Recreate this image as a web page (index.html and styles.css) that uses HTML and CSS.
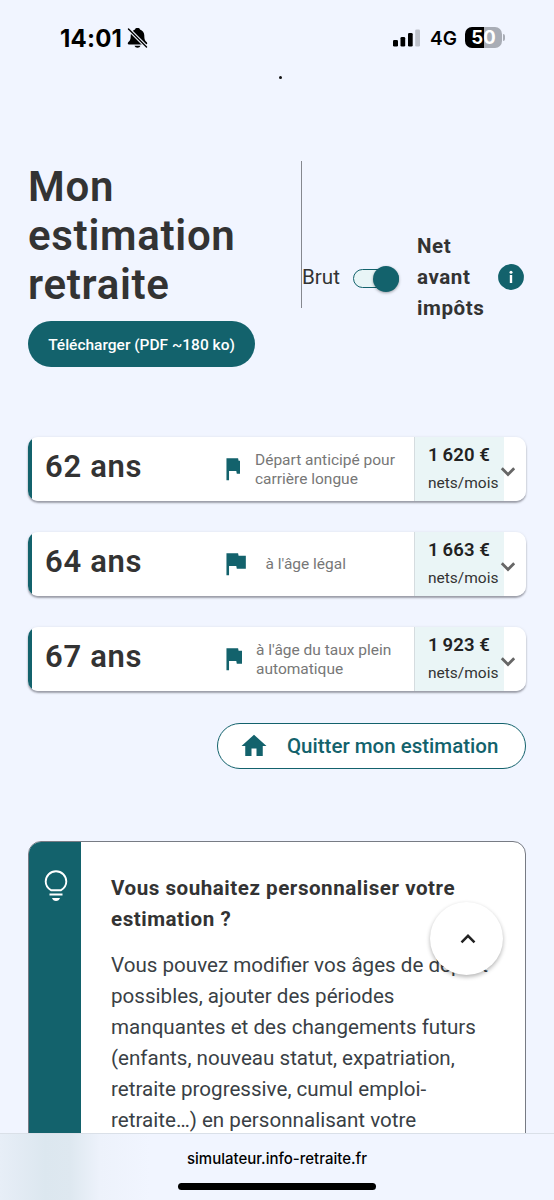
FILE: index.html
```html
<!DOCTYPE html>
<html lang="fr">
<head>
    <meta charset="UTF-8">
    <title>Mon estimation retraite</title>
    <link rel="stylesheet" href="styles.css">
</head>
<body>
    <div class="statut">
        <span class="heure">14:01</span>
        <svg class="cloche" width="22" height="22" viewBox="0 0 22 22">
            <path d="M10.500 1C9.100 1 8.300 1.500 8 2.400C5.400 3.300 3.700 5.600 3.700 8.500C3.700 12.800 2.700 13.900 1.200 15.300C0.400 16.200 0.700 17.600 2 17.600H19C20.300 17.600 20.600 16.200 19.800 15.300C18.300 13.900 17.300 12.800 17.300 8.500C17.300 5.600 15.600 3.300 13 2.400C12.700 1.500 11.900 1 10.500 1ZM7.500 18.800C8 20 9 20.700 10.500 20.700C12 20.700 13 20 13.500 18.800Z"/>
            <path d="M0.500 1L20 20.500" stroke="#f1f5ff" stroke-width="3.600"/>
            <path d="M1.500 2L19.500 20" stroke="#000" stroke-width="1.400" stroke-linecap="round"/>
        </svg>
        <svg class="reseau" width="28" height="18" viewBox="0 0 28 18">
            <rect x="0" y="11" width="5" height="6.500" rx="1.300"/>
            <rect x="7.500" y="8" width="4.700" height="9.500" rx="1.300"/>
            <rect x="15" y="4" width="4.700" height="13.500" rx="1.300"/>
            <rect x="22.200" y="0.500" width="4.800" height="17" rx="1.300" fill="#bfc3cc"/>
        </svg>
        <span class="g4">4G</span>
        <span class="batterie"><b>5</b><b>0</b></span>
        <span class="borne"></span>
    </div>
    <div class="point"></div>

    <main>
        <header>
            <h1>Mon<br>estimation<br>retraite</h1>
            <div class="choix">
                <span class="brut">Brut</span>
                <span class="bascule"><i></i></span>
                <strong>Net<br>avant<br>impôts</strong>
                <svg class="info" width="26" height="26" viewBox="0 0 26 26">
                    <circle cx="13" cy="13" r="12.900" fill="#13626c"/>
                    <circle cx="13" cy="8.200" r="1.500" fill="#fff"/>
                    <path d="M13 11V19" stroke="#fff" stroke-width="2.400"/>
                </svg>
            </div>
        </header>
        <button class="telecharger">Télécharger (PDF ~180 ko)</button>

        <section class="ages">
            <div class="carte">
                <h2>62 ans</h2>
                <span class="drapeau etroit"><svg viewBox="0 0 24 24"><path d="M14.400 6L14 4H5v17h2v-7h5.600l.4 2h7V6z"/></svg></span>
                <p class="l62">Départ anticipé pour<br>carrière longue</p>
                <div class="montant"><b>1&#8201;620 €</b><span>nets/mois</span></div>
                <svg class="fleche" width="16" height="12" viewBox="0 0 16 12"><path d="M1.800 2.200L8 8.400L14.200 2.200"/></svg>
            </div>
            <div class="carte">
                <h2>64 ans</h2>
                <span class="drapeau"><svg viewBox="0 0 24 24"><path d="M14.400 6L14 4H5v17h2v-7h5.600l.4 2h7V6z"/></svg></span>
                <p class="l64">à l'âge légal</p>
                <div class="montant"><b>1&#8201;663 €</b><span>nets/mois</span></div>
                <svg class="fleche" width="16" height="12" viewBox="0 0 16 12"><path d="M1.800 2.200L8 8.400L14.200 2.200"/></svg>
            </div>
            <div class="carte">
                <h2>67 ans</h2>
                <span class="drapeau moyen"><svg viewBox="0 0 24 24"><path d="M14.400 6L14 4H5v17h2v-7h5.600l.4 2h7V6z"/></svg></span>
                <p class="l67">à l'âge du taux plein<br>automatique</p>
                <div class="montant"><b>1&#8201;923 €</b><span>nets/mois</span></div>
                <svg class="fleche" width="16" height="12" viewBox="0 0 16 12"><path d="M1.800 2.200L8 8.400L14.200 2.200"/></svg>
            </div>
        </section>

        <button class="quitter">
            <svg width="30" height="30" viewBox="0 0 24 24"><path d="M10 20v-6h4v6h5v-8h3L12 3 2 12h3v8z"/></svg>
            <span>Quitter mon estimation</span>
        </button>

        <section class="conseil">
            <div class="bande">
                <svg width="24" height="32" viewBox="0 0 24 32" fill="none" stroke="#fff">
                    <path d="M7.300 20.300C4 18.500 1.700 15.400 1.700 11.500A10.300 10.300 0 0 1 22.300 11.500C22.300 15.400 20 18.500 16.700 20.300Z" stroke-width="1.900" stroke-linejoin="round"/>
                    <path d="M5.500 24.400H18.500" stroke-width="2"/>
                    <path d="M8 28H16Q15 31 12 31Q9 31 8 28Z" fill="#fff" stroke="none"/>
                </svg>
            </div>
            <div class="texte">
                <h3>Vous souhaitez personnaliser votre<br>estimation ?</h3>
                <p>Vous pouvez modifier vos âges de départ<br>possibles, ajouter des périodes<br>manquantes et des changements futurs<br>(enfants, nouveau statut, expatriation,<br>retraite progressive, cumul emploi-<br>retraite…) en personnalisant votre</p>
            </div>
        </section>
    </main>

    <button class="haut">
        <svg width="16" height="12" viewBox="0 0 16 12"><path d="M1.500 9.300L8 2.800L14.500 9.300"/></svg>
    </button>

    <footer>
        <span>simulateur.info-retraite.fr</span>
        <div class="barre"></div>
    </footer>
</body>
</html>
```
FILE: styles.css
```css
* {
    box-sizing: border-box;
}
body {
    margin: 0;
    width: 554px;
    height: 1200px;
    overflow: hidden;
    position: relative;
    display: flex;
    flex-direction: column;
    background-color: #f1f5ff;
    font-family: Roboto, "Liberation Sans", sans-serif;
    color: #333;
    white-space: nowrap;
}
h1, h2, h3, p {
    margin: 0;
}
button {
    font-family: inherit;
    border: none;
    padding: 0;
}
svg {
    display: block;
    flex: none;
}

/* barre de statut */
.statut {
    height: 75px;
    flex: none;
    display: flex;
    align-items: center;
    padding-left: 60px;
    font-family: Inter, sans-serif;
    color: #000;
}
.heure {
    width: 67px;
    padding-top: 1px;
    font-size: 24px;
    font-weight: 700;
    letter-spacing: 0.2px;
}
.reseau {
    margin-left: 244px;
}
.g4 {
    width: 35px;
    padding-top: 1px;
    margin-left: 9px;
    font-size: 19px;
    font-weight: 600;
}
.batterie {
    width: 37px;
    height: 21px;
    border-radius: 7px;
    display: flex;
    align-items: center;
    background: linear-gradient(to right, #000 50%, #a9adb6 50%);
    color: #fff;
    font-size: 18.500px;
    line-height: 21px;
    justify-content: center;
}
.borne {
    width: 2px;
    height: 7px;
    margin-left: 1px;
    border-radius: 0 2px 2px 0;
    background: #a9adb6;
}
.point {
    width: 3px;
    height: 3px;
    margin: 1px 0 0 279px;
    flex: none;
    border-radius: 50%;
    background: #111;
}

main {
    padding: 82px 28px 0;
    display: flex;
    flex-direction: column;
    height: 1054px;
    overflow: hidden;
}
header {
    display: flex;
    height: 147px;
    flex: none;
}
h1 {
    width: 273px;
    padding-top: 1px;
    font-size: 42px;
    line-height: 49px;
    font-weight: 600;
    letter-spacing: 0.7px;
}
.choix {
    flex: 1;
    border-left: 1px solid #85888f;
    display: flex;
    align-items: center;
    padding-top: 85px;
    font-size: 20.600px;
    line-height: 31px;
}
.choix > * {
    flex: none;
}
.brut {
    width: 51px;
}
.bascule {
    width: 46px;
    height: 19px;
    border: 1px solid #13626c;
    border-radius: 10px;
    background: #e8f5f6;
    display: flex;
    align-items: center;
    justify-content: flex-end;
    margin-top: 3px;
}
.bascule i {
    width: 26px;
    height: 26px;
    flex: none;
    margin-right: -1px;
    border-radius: 50%;
    background: #13626c;
    box-shadow: 0 1px 3px rgba(0, 0, 0, 0.35);
}
.choix strong {
    width: 80.500px;
    margin-left: 18px;
    font-weight: 700;
    letter-spacing: 0.55px;
}

.telecharger {
    width: 227px;
    height: 46px;
    flex: none;
    margin-top: 13px;
    padding-top: 1px;
    border-radius: 23px;
    background: #13626c;
    color: #fff;
    font-size: 15.500px;
    font-weight: 500;
}

/* cartes par age */
.ages {
    margin-top: 70px;
    display: flex;
    flex-direction: column;
    gap: 31px;
}
.carte {
    height: 64px;
    border-radius: 10px;
    overflow: hidden;
    background: linear-gradient(to right, #13626c 4px, #fff 4px);
    box-shadow: 0 2px 2px rgba(60, 60, 70, 0.45), 0 0 3px rgba(0, 0, 0, 0.08);
    display: flex;
    align-items: center;
}
.carte h2 {
    width: 180px;
    padding: 0 0 5px 17px;
    font-size: 31px;
    line-height: 36px;
    font-weight: 600;
    letter-spacing: 0.7px;
}
.drapeau {
    width: 31px;
    height: 31px;
    margin: -1px 0 0 11.500px;
    overflow: hidden;
    flex: none;
}
.drapeau svg {
    width: 31px;
    height: 31px;
    fill: #13626c;
}
.etroit {
    width: 20.500px;
}
.moyen {
    width: 22.500px;
}
.carte p {
    flex: 1;
    color: #777;
    font-size: 15.500px;
    line-height: 19px;
    padding-top: 1px;
}
.carte .l62 {
    padding-left: 15px;
}
.carte .l64 {
    padding-left: 15px;
}
.carte .l67 {
    padding-left: 14px;
}
.montant {
    width: 90px;
    height: 64px;
    border-left: 1px solid #d5dcdf;
    background: #eaf5f6;
    padding: 4px 0 0 13px;
    display: flex;
    flex-direction: column;
}
.montant b {
    font-size: 18.500px;
    line-height: 28px;
    font-weight: 600;
    color: #222;
    letter-spacing: 0.1px;
}
.montant span {
    font-size: 15.500px;
    line-height: 28px;
}
.fleche {
    margin: 6px 10px 0 -4px;
    fill: none;
    stroke: #666;
    stroke-width: 2.800;
}

.quitter {
    width: 309px;
    height: 46px;
    flex: none;
    margin-top: 32px;
    align-self: flex-end;
    border: 1px solid #13626c;
    border-radius: 23px;
    background: #fff;
    color: #13626c;
    display: flex;
    align-items: center;
    padding-left: 21px;
    gap: 18px;
    font-size: 20.500px;
    font-weight: 500;
}
.quitter svg {
    fill: #13626c;
}

/* encart conseil */
.conseil {
    height: 400px;
    flex: none;
    margin-top: 72px;
    display: flex;
    border: 1px solid #777b84;
    border-radius: 13px;
    overflow: hidden;
    background: #fff;
}
.bande {
    width: 52px;
    background: #13626c;
    padding: 28px 0 0 14.500px;
}
.texte {
    padding: 31px 0 0 30px;
    font-size: 20.600px;
    line-height: 31px;
}
.texte h3 {
    font-size: 20.600px;
    font-weight: 700;
    letter-spacing: 0.52px;
}
.texte p {
    margin-top: 15px;
    color: #3a3f45;
}

.haut {
    position: absolute;
    left: 430px;
    top: 902px;
    width: 73px;
    height: 73px;
    border-radius: 50%;
    background: #fff;
    box-shadow: 0 2px 4px rgba(0, 0, 0, 0.3);
    display: flex;
    align-items: center;
    justify-content: center;
}
.haut svg {
    margin-left: 2px;
    fill: none;
    stroke: #222;
    stroke-width: 2.500;
}

footer {
    position: absolute;
    left: 0;
    top: 1133px;
    width: 554px;
    height: 67px;
    border-top: 1px solid #dae0e8;
    background: linear-gradient(to right, #e7eef7 0, #dce7ef 45px, #dee8f0 70px, #edf2fb 100px, #f1f5ff 150px);
    display: flex;
    flex-direction: column;
    align-items: center;
    color: #000;
    font-family: Inter, sans-serif;
    font-size: 15px;
    font-weight: 500;
    line-height: 20px;
    padding-top: 15px;
}
.barre {
    width: 198px;
    height: 7px;
    margin-top: 14px;
    border-radius: 4px;
    background: #000;
}
```
